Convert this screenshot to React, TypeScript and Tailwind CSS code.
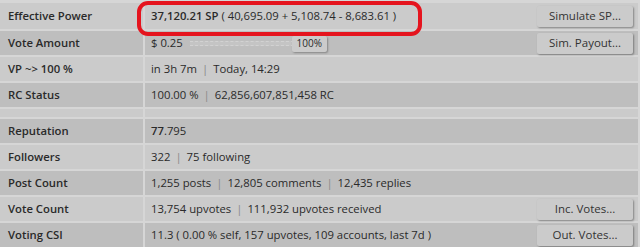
import React from "react"

type Row = {
  label: string
  value: React.ReactNode
  button?: string
  dark?: boolean
}

const Sep = () => <span className="mx-[5px] text-[#8a8a8a]">|</span>

function Btn({ children }: { children: React.ReactNode }) {
  return (
    <button className="h-[21px] w-[96px] rounded-[2px] bg-[#cbcbcb] text-[11.5px] text-[#333] shadow-[1px_1px_2px_rgba(0,0,0,0.35)] leading-none">
      {children}
    </button>
  )
}

export default function App() {
  const rows: Row[] = [
    {
      label: "Vote Amount",
      dark: true,
      button: "Sim. Payout...",
      value: (
        <div className="flex items-center">
          <span>$ 0.25</span>
          <div className="ml-[7px] flex items-center">
            <div className="h-[5px] w-[104px] border-y border-dashed border-[#d2d2d2] bg-[#c4c4c4]" />
            <div className="-ml-[2px] flex h-[16px] w-[35px] items-center justify-center rounded-[2px] bg-[#cbcbcb] text-[10px] shadow-[1px_1px_2px_rgba(0,0,0,0.3)]">
              100%
            </div>
          </div>
        </div>
      ),
    },
    {
      label: "VP ~> 100 %",
      value: (
        <span>
          in 3h 7m<Sep />Today, 14:29
        </span>
      ),
    },
    {
      label: "RC Status",
      dark: true,
      value: (
        <span>
          100.00 %<Sep />62,856,607,851,458 RC
        </span>
      ),
    },
  ]

  const rows2: Row[] = [
    {
      label: "Reputation",
      dark: true,
      value: (
        <span>
          <b className="font-semibold">77</b>.795
        </span>
      ),
    },
    {
      label: "Followers",
      value: (
        <span>
          322<Sep />75 following
        </span>
      ),
    },
    {
      label: "Post Count",
      dark: true,
      value: (
        <span>
          1,255 posts<Sep />12,805 comments<Sep />12,435 replies
        </span>
      ),
    },
    {
      label: "Vote Count",
      button: "Inc. Votes...",
      value: (
        <span>
          13,754 upvotes<Sep />111,932 upvotes received
        </span>
      ),
    },
    {
      label: "Voting CSI",
      dark: true,
      button: "Out. Votes...",
      value: <span>11.3 ( 0.00 % self, 157 upvotes, 109 accounts, last 7d )</span>,
    },
  ]

  const renderRow = (r: Row, h = "h-[24px]") => (
    <div key={r.label} className={`flex gap-[2px] ${h}`}>
      <div
        className={`flex w-[143px] shrink-0 items-center pl-[8px] pt-[1px] font-semibold ${
          r.dark ? "bg-[#bebebe]" : "bg-[#cbcbcb]"
        }`}
      >
        {r.label}
      </div>
      <div
        className={`flex flex-1 items-center justify-between pl-[6px] pr-[5px] ${
          r.dark ? "bg-[#bebebe]" : "bg-[#cbcbcb]"
        }`}
      >
        <div className="pt-[1px]">{r.value}</div>
        {r.button && <Btn>{r.button}</Btn>}
      </div>
    </div>
  )

  return (
    <div
      className="relative flex h-[247px] w-[640px] flex-col gap-[2px] overflow-hidden bg-[#d6d6d6] pt-[3px] pr-[2px] text-[11.3px] text-[#2a2a2a]"
      style={{ fontFamily: '"Open Sans", sans-serif' }}
    >
      {renderRow(
        {
          label: "Effective Power",
          button: "Simulate SP...",
          value: (
            <span>
              <b className="font-semibold">37,120.21 SP</b> ( 40,695.09 + 5,108.74 - 8,683.61 )
            </span>
          ),
        },
        "h-[26px]"
      )}
      {rows.map((r) => renderRow(r))}
      <div className="flex h-[8px] gap-[2px]">
        <div className="w-[143px] bg-[#cbcbcb]" />
        <div className="flex-1 bg-[#cbcbcb]" />
      </div>
      {rows2.map((r) => renderRow(r))}

      {/* red highlight */}
      <div className="pointer-events-none absolute left-[137px] top-[1px] h-[35px] w-[285px] rounded-[11px] border-[4px] border-[#e5141e]" />
    </div>
  )
}
